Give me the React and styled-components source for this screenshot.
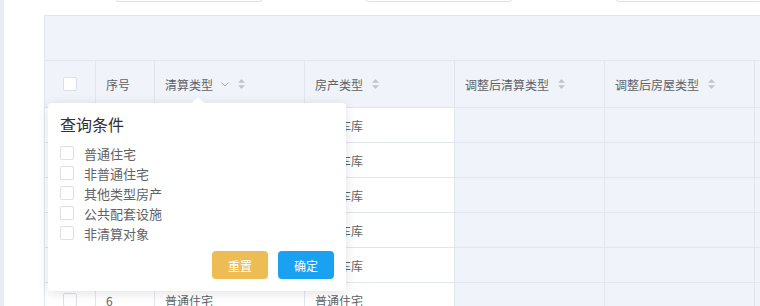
import React from "react";
import styled, { createGlobalStyle } from "styled-components";

const GlobalStyle = createGlobalStyle`
    html, body {
        margin: 0;
        padding: 0;
        overflow: hidden;
        background: #fff;
    }
    body {
        font-family: "Noto Sans CJK SC", "Noto Sans", sans-serif;
        color: #606266;
    }
`;

const COLS = [51, 59, 150, 150, 150, 150, 150];

const columns = [
    { key: "check" },
    { key: "no", title: "序号" },
    { key: "type", title: "清算类型", filter: true, sort: true },
    { key: "house", title: "房产类型", sort: true },
    { key: "adjType", title: "调整后清算类型", sort: true, tinted: true },
    { key: "adjHouse", title: "调整后房屋类型", sort: true, tinted: true },
    { key: "extra", tinted: true },
];

const rows = [
    { no: "", type: "", house: "地下车库" },
    { no: "", type: "", house: "地下车库" },
    { no: "", type: "", house: "地下车库" },
    { no: "", type: "", house: "地下车库" },
    { no: "", type: "", house: "地下车库" },
    { no: "6", type: "普通住宅", house: "普通住宅" },
];

const options = ["普通住宅", "非普通住宅", "其他类型房产", "公共配套设施", "非清算对象"];

const Page = styled.div`
    display: flex;
    height: 306px;
`;

const SideEdge = styled.div`
    width: 4px;
    flex: none;
    background: #e9edf2;
`;

const Main = styled.div`
    flex: 1;
    min-width: 0;
    padding-left: 40px;
`;

const FilterRow = styled.div`
    display: flex;
    gap: 102px;
    margin-top: -28px;
    padding-left: 71px;
`;

const Input = styled.div`
    width: ${(p) => p.$w}px;
    height: 30px;
    flex: none;
    box-sizing: border-box;
    border: 1px solid #dcdfe6;
    border-radius: 4px;
    background: #fff;
`;

const TableWrap = styled.div`
    position: relative;
    margin-top: 13px;
    width: ${COLS.reduce((a, b) => a + b, 0) + 1}px;
    border-left: 1px solid #e1e6ee;
    border-top: 1px solid #e1e6ee;
`;

const Band = styled.div`
    height: 44px;
    background: #f0f4fa;
    border-bottom: 1px solid #e1e6ee;
`;

const Row = styled.div`
    display: grid;
    grid-template-columns: ${COLS.map((c) => c + "px").join(" ")};
    height: ${(p) => p.$h}px;
    background: ${(p) => (p.$head ? "#f0f4fa" : "transparent")};
`;

const Cell = styled.div`
    display: flex;
    align-items: center;
    justify-content: ${(p) => (p.$center ? "center" : "flex-start")};
    padding: 0 10px;
    box-sizing: border-box;
    border-right: 1px solid #e1e6ee;
    border-bottom: 1px solid #e1e6ee;
    background: ${(p) => (p.$tinted ? "#f0f4fa" : "transparent")};
    font-size: 12px;
    color: #606266;
    white-space: nowrap;
    overflow: hidden;
`;

const HeadText = styled.span`
    display: inline-flex;
    align-items: center;
    gap: 8px;
`;

const Box = styled.span`
    display: inline-block;
    width: 14px;
    height: 14px;
    flex: none;
    box-sizing: border-box;
    border: 1px solid #dcdfe6;
    border-radius: 2px;
    background: #fff;
`;

const Popover = styled.div`
    position: absolute;
    left: 3px;
    top: 87px;
    width: 298px;
    box-sizing: border-box;
    padding: 9px 12px 12px;
    background: #fff;
    border-radius: 4px;
    box-shadow: 0 2px 12px rgba(0, 0, 0, 0.12);
    z-index: 2;
`;

const Arrow = styled.span`
    position: absolute;
    left: 144px;
    top: -6px;
    width: 0;
    height: 0;
    border-left: 6px solid transparent;
    border-right: 6px solid transparent;
    border-bottom: 6px solid #fff;
    filter: drop-shadow(0 -1px 0 #ebeef5);
`;

const Title = styled.div`
    font-size: 16px;
    line-height: 24px;
    color: #303133;
`;

const OptionList = styled.ul`
    list-style: none;
    margin: 7px 0 0;
    padding: 0;
`;

const Option = styled.li`
    display: flex;
    align-items: center;
    gap: 10px;
    height: 20px;
    font-size: 13px;
    color: #606266;
`;

const Actions = styled.div`
    display: flex;
    justify-content: flex-end;
    gap: 10px;
    margin-top: 8px;
`;

const Button = styled.button`
    width: 56px;
    height: 28px;
    border: none;
    border-radius: 4px;
    background: ${(p) => p.$bg};
    color: #fff;
    font-family: inherit;
    font-size: 12px;
    padding: 0;
`;

const SortIcon = () => (
    <svg width="9" height="12" viewBox="0 0 9 12">
        <path d="M4.5 1 L8 4.8 L1 4.8 Z" fill="#c0c4cc" />
        <path d="M4.5 11 L8 7.2 L1 7.2 Z" fill="#c0c4cc" />
    </svg>
);

const Chevron = () => (
    <svg width="8" height="5" viewBox="0 0 8 5">
        <path d="M0.5 0.5 L4 4 L7.5 0.5" fill="none" stroke="#a8abb2" strokeWidth="1" />
    </svg>
);

export default function App() {
    return (
        <>
            <GlobalStyle />
            <Page>
                <SideEdge />
                <Main>
                    <FilterRow>
                        <Input $w={148} />
                        <Input $w={148} />
                        <Input $w={148} />
                    </FilterRow>
                    <TableWrap>
                        <Band />
                        <Row $h={47} $head>
                            {columns.map((c) => (
                                <Cell key={c.key} $center={c.key === "check"}>
                                    {c.key === "check" ? (
                                        <Box />
                                    ) : (
                                        <HeadText>
                                            {c.title}
                                            {c.filter && <Chevron />}
                                            {c.sort && <SortIcon />}
                                        </HeadText>
                                    )}
                                </Cell>
                            ))}
                        </Row>
                        {rows.map((r, i) => (
                            <Row key={i} $h={35}>
                                <Cell $center>
                                    <Box />
                                </Cell>
                                <Cell>{r.no}</Cell>
                                <Cell>{r.type}</Cell>
                                <Cell>{r.house}</Cell>
                                <Cell $tinted />
                                <Cell $tinted />
                                <Cell $tinted />
                            </Row>
                        ))}
                        <Popover>
                            <Arrow />
                            <Title>查询条件</Title>
                            <OptionList>
                                {options.map((o) => (
                                    <Option key={o}>
                                        <Box />
                                        {o}
                                    </Option>
                                ))}
                            </OptionList>
                            <Actions>
                                <Button $bg="#eebc55">重置</Button>
                                <Button $bg="#1ba1f2">确定</Button>
                            </Actions>
                        </Popover>
                    </TableWrap>
                </Main>
            </Page>
        </>
    );
}
